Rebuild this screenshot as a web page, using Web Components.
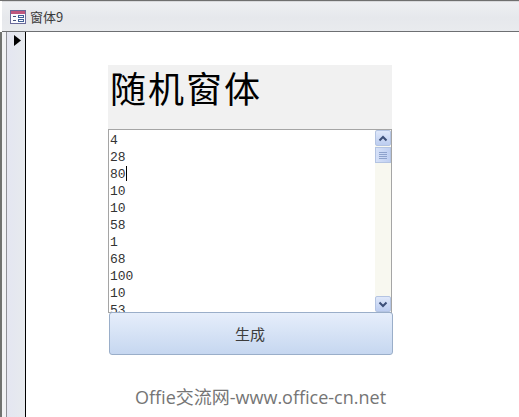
<!DOCTYPE html>
<html>
<head>
<meta charset="utf-8">
<title>窗体9</title>
<style>
  html, body { margin: 0; padding: 0; background: #fff; }
  body { width: 519px; height: 417px; overflow: hidden; }
</style>
</head>
<body>
<form-window caption="窗体9">
  <random-form heading="随机窗体" button="生成" footer="Offie交流网-www.office-cn.net">4
28
80
10
10
58
1
68
100
10
53</random-form>
</form-window>

<script>
// 窗口外框: 标题栏 + 记录选择器 + 内容区
class FormWindow extends HTMLElement {
  connectedCallback() {
    this.attachShadow({ mode: 'open' });
    this.shadowRoot.innerHTML = `
      <style>
        :host {
          display: flex;
          flex-direction: column;
          width: 519px;
          height: 417px;
          font-family: "Noto Sans CJK SC", "Liberation Sans", sans-serif;
          box-sizing: border-box;
          border-top: 1px solid #6f6f6f;
        }
        .title {
          display: flex;
          align-items: center;
          gap: 4px;
          height: 31px;
          flex: none;
          box-sizing: border-box;
          margin-left: 2px;
          padding: 0 0 0 8px;
          background: linear-gradient(#eeeff2, #e6e8ec 55%, #e9ebee);
          border-bottom: 1px solid #6d6f72;
          border-top: 1px solid #d8d9dc;
          font-size: 13px;
          color: #3a3a3a;
        }
        svg { display: block; flex: none; }
        .main { display: flex; flex: 1; min-height: 0; }
        .frame { width: 2px; background: #70726f; flex: none; }
        .gutter { width: 4px; background: #f1f2f4; border-right: 1px solid #8f9096; flex: none; }
        .selector {
          width: 18px;
          flex: none;
          background: linear-gradient(90deg, #e4e6f1, #e7eaee);
          border-right: 1px solid #000;
          box-sizing: content-box;
          padding-top: 2px;
        }
        .content { flex: 1; min-width: 0; }
      </style>
      <div class="title">
        <svg width="16" height="14" viewBox="0 0 16 14">
          <rect x="0.5" y="0.5" width="15" height="13" fill="#fbfbff" stroke="#6a6a9a"/>
          <rect x="1" y="1" width="14" height="3" fill="#c0567e"/>
          <path d="M3 6.5h3M3 10.5h3" stroke="#45507a" fill="none"/>
          <rect x="8.5" y="5.5" width="5" height="2" fill="none" stroke="#3f5f96"/>
          <rect x="8.5" y="9.5" width="5" height="2" fill="none" stroke="#3f5f96"/>
        </svg>
        <span>${this.getAttribute('caption')}</span>
      </div>
      <div class="main">
        <div class="frame"></div>
        <div class="gutter"></div>
        <div class="selector">
          <svg width="18" height="13" viewBox="0 0 18 13"><path d="M7 1l7 5.5-7 5.5z" fill="#000"/></svg>
        </div>
        <div class="content"><slot></slot></div>
      </div>
    `;
  }
}

// 滚动条
class ScrollBar extends HTMLElement {
  connectedCallback() {
    this.attachShadow({ mode: 'open' });
    this.shadowRoot.innerHTML = `
      <style>
        :host {
          display: flex;
          flex-direction: column;
          justify-content: space-between;
          width: 16px;
          flex: none;
          background: #f8f8f0;
          height: 100%;
        }
        .top { display: flex; flex-direction: column; gap: 1px; }
        .btn {
          height: 16px;
          box-sizing: border-box;
          border: 1px solid #b4c4e2;
          border-radius: 2px;
          background: linear-gradient(#dfe8fa, #bccdf0);
          display: flex;
          align-items: center;
          justify-content: center;
        }
        .thumb {
          height: 16px;
          box-sizing: border-box;
          border: 1px solid #b4c4e2;
          background: linear-gradient(90deg, #d6e1f8, #c0d0f2);
          display: flex;
          align-items: center;
          justify-content: center;
        }
        svg { display: block; }
      </style>
      <div class="top">
        <div class="btn"><svg width="10" height="7" viewBox="0 0 10 7"><path d="M1.5 5.5L5 2l3.5 3.5" fill="none" stroke="#3c4f78" stroke-width="2"/></svg></div>
        <div class="thumb"><svg width="8" height="9" viewBox="0 0 8 9"><path d="M0 1.5h8M0 3.5h8M0 5.5h8M0 7.5h8" stroke="#8ea2cc"/></svg></div>
      </div>
      <div class="btn"><svg width="10" height="7" viewBox="0 0 10 7"><path d="M1.5 1.5L5 5l3.5-3.5" fill="none" stroke="#3c4f78" stroke-width="2"/></svg></div>
    `;
  }
}

// 窗体内容: 标题, 文本框, 按钮, 水印
class RandomForm extends HTMLElement {
  connectedCallback() {
    const lines = this.textContent.split('\n');
    this.attachShadow({ mode: 'open' });
    this.shadowRoot.innerHTML = `
      <style>
        :host {
          display: flex;
          flex-direction: column;
          padding: 33px 0 0 82px;
          width: 285px;
        }
        h1 {
          margin: 0;
          height: 64px;
          box-sizing: border-box;
          width: 284px;
          padding: 0 0 0 2px;
          background: #f1f1f1;
          font: 400 36px/44px "Noto Sans CJK SC", sans-serif;
          letter-spacing: 2px;
          color: #000;
        }
        .box {
          display: flex;
          width: 284px;
          height: 184px;
          box-sizing: border-box;
          border: 1px solid #a5a5a5;
          background: #fff;
        }
        .lines {
          flex: 1;
          overflow: hidden;
          padding: 2px 0 0 1px;
          font: 13px/17.05px "Liberation Mono", monospace;
          color: #333;
        }
        .lines div { height: 17.05px; }
        .caret { display: inline-block; width: 1px; height: 15px; background: #000; vertical-align: -3px; }
        button {
          display: block;
          width: 284px;
          height: 43px;
          margin: -1px 0 0 1px;
          padding: 0 2px 0 0;
          border: 1px solid #9aaec9;
          border-radius: 3px;
          background: linear-gradient(#e6eefb, #c6d7f0);
          font: 15px "Noto Sans CJK SC", sans-serif;
          color: #3c3c3c;
        }
        .foot {
          margin: 29px 0 0 -2px;
          width: 304px;
          text-align: left;
          padding-left: 29px;
          white-space: nowrap;
          font: 18px/26px "Open Sans", "Noto Sans CJK SC", sans-serif;
          color: #757575;
        }
      </style>
      <h1>${this.getAttribute('heading')}</h1>
      <div class="box">
        <div class="lines">
          ${lines.map((n, i) => `<div>${n}${i === 2 ? '<span class="caret"></span>' : ''}</div>`).join('')}
        </div>
        <scroll-bar></scroll-bar>
      </div>
      <button type="button">${this.getAttribute('button')}</button>
      <div class="foot">${this.getAttribute('footer')}</div>
    `;
  }
}

customElements.define('form-window', FormWindow);
customElements.define('scroll-bar', ScrollBar);
customElements.define('random-form', RandomForm);
</script>
</body>
</html>
